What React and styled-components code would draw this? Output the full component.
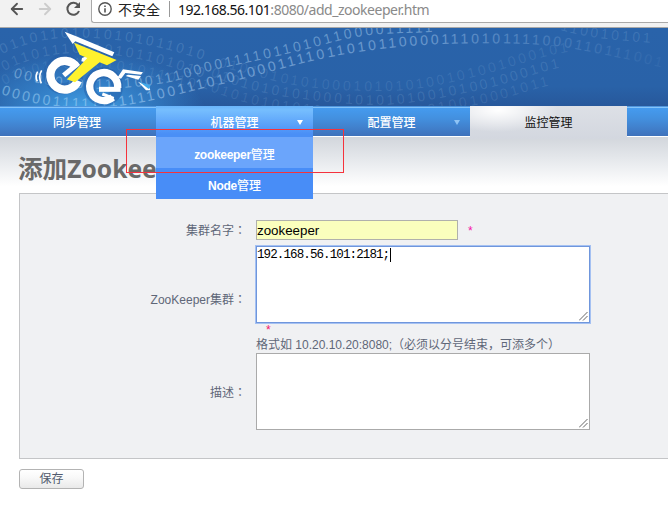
import React from 'react';
import styled, { createGlobalStyle, css } from 'styled-components';
import { ArrowLeft, ArrowRight } from 'lucide-react';

const GlobalStyle = createGlobalStyle`
  * { box-sizing: border-box; }
  body {
    margin: 0;
    background: #fff;
    overflow: hidden;
    font: 12px/16px "Liberation Sans", "Noto Sans CJK SC", sans-serif;
    color: #5f6778;
  }
`;

const Page = styled.div`
  position: relative;
  width: 668px;
  height: 519px;
  overflow: hidden;
`;

const BrowserBar = styled.div`
  display: flex;
  height: 28px;
  background: #f2f2f2;
  border-bottom: 1px solid #a9a9a9;
`;

const BrowserButtons = styled.div`
  display: flex;
  width: 91px;
  padding: 0 8px;
  gap: 10px;

  svg { flex: none; }
`;

const AddressBox = styled.div`
  display: flex;
  flex: 1;
  align-items: center;
  height: 23px;
  padding: 0 0 4px 6px;
  background: #fff;
  border: solid #a9a9a9;
  border-width: 0 0 1px 1px;
  border-bottom-left-radius: 3px;
  font: 14px/19px "Noto Sans", "Noto Sans CJK SC", sans-serif;
  color: #8a8a8a;
  white-space: nowrap;
`;

const Insecure = styled.span`
  margin-left: 6px;
  font-family: "Noto Sans CJK SC", sans-serif;
  color: #222;
`;

const Divider = styled.i`
  width: 1px;
  height: 16px;
  margin: 0 8px 0 9px;
  background: #999;
`;

const Host = styled.span`
  color: #111;
  letter-spacing: -0.5px;
`;

const Path = styled.span`
  letter-spacing: -0.47px;
`;

const Banner = styled.header`
  height: 78px;
  background:
    radial-gradient(ellipse 120px 60px at 85px 84px, #46a5e8 0%, #3584cc 40%, rgba(41, 98, 168, 0) 100%),
    linear-gradient(#2963aa 0%, #2962a8 75%, #27589b 100%);

  svg { display: block; }
`;

const Digits = styled.text`
  font: 14px "Liberation Sans", sans-serif;
  letter-spacing: 2.8px;
  fill: ${p => p.$fill || '#b5d9f5'};
  fill-opacity: ${p => p.$alpha};
`;

const Nav = styled.nav`
  display: flex;
  height: 31px;
  background: linear-gradient(#4f95dd 0 1px, #84c4fb 1px 2px, #459bef 2px, #4390df 40%, #3f72bb 30px, #fff 30px);
`;

const NavItem = styled.div`
  position: relative;
  display: flex;
  align-items: center;
  justify-content: center;
  width: 157px;
  padding-top: 3px;
  color: #fff;
  font-weight: 500;
  ${p => p.$first && css`
    width: 156px;
    padding-right: 2px;
  `}
  ${p => p.$open && css`
    background: linear-gradient(#69b4fb, #76befe 4px, #4a8ff6 28px);
  `}
  ${p => p.$light && css`
    height: 33px;
    padding-top: 1px;
    background:
      radial-gradient(ellipse 60px 22px at 28px 4px, #fff, rgba(255,255,255,0)),
      linear-gradient(#dde0e6, #d3d7df);
    color: #111;
    font-weight: 400;
  `}
`;

const Caret = styled.i`
  position: absolute;
  top: 14px;
  right: 10px;
  border: solid transparent;
  border-width: 5px 3px 0;
  border-top-color: ${p => p.$color};
`;

const Menu = styled.div`
  position: absolute;
  z-index: 2;
  top: 31px;
  left: 0;
  width: 157px;
`;

const MenuItem = styled.div`
  display: flex;
  align-items: center;
  justify-content: center;
  height: 31px;
  padding-top: 5px;
  background: ${p => (p.$active ? '#6ba5fb' : '#488df7')};

  b { letter-spacing: -0.3px; }
`;

const Heading = styled.div`
  height: 56px;
  padding: 15px 19px 0;
  background: linear-gradient(#d2d6dc, #e3e6ea 35%, #fff 88%);
`;

const Title = styled.h1`
  margin: 0 0 0 -1px;
  font: bold 24.6px/34px "Noto Sans", "Noto Sans CJK SC", sans-serif;
  color: #696969;
`;

const Panel = styled.form`
  height: 266px;
  margin-left: 19px;
  padding-top: 26px;
  background: #f0f1f3;
  border: 1px solid #c4c5c7;
  border-right: 0;
`;

const Row = styled.div`
  display: grid;
  grid-template-columns: 226px 1fr;
  column-gap: 10px;
  align-items: center;
  height: ${p => p.$height}px;
`;

const Label = styled.label`
  padding-top: ${p => p.$drop || 0}px;
  text-align: right;

  span { font-family: "Noto Sans CJK JP", sans-serif; }
`;

const TextInput = styled.input`
  width: 202px;
  height: 20px;
  margin: 0;
  padding: 1px 0 0;
  border: 1px solid #b0b1ac;
  outline: 0;
  background: #faffbd;
  color: #000;
  font: 13.33px "Liberation Sans", sans-serif;
`;

const Required = styled.i`
  margin-left: 10px;
  color: ${p => p.$color || '#f21a6c'};
  font-style: normal;
`;

const TextArea = styled.div`
  display: flex;
  align-items: flex-end;
  justify-content: space-between;
  width: 334px;
  height: 77px;
  padding: 1px;
  border: 1px solid ${p => (p.$focused ? '#6f96dc' : '#aaa')};
  box-shadow: ${p => (p.$focused ? '0 0 0 1px #a5c1f2' : 'none')};
  background: #fff;
  color: #000;
  font: 12.5px/16px "Liberation Mono", monospace;
  letter-spacing: -0.89px;
`;

const TypedText = styled.span`
  align-self: flex-start;
  height: 14px;
  margin-left: -1px;
  padding-right: 1px;
  line-height: 15px;
  border-right: 1px solid #000;
`;

const Hint = styled.div`
  height: 31px;
  margin-top: -6px;
  padding-left: 236px;
  line-height: 16px;

  div:last-child { line-height: 15px; }
`;

const SaveButton = styled.button`
  display: block;
  width: 65px;
  height: 20px;
  margin: 10px 0 0 19px;
  padding: 0;
  border: 1px solid #b3b3b3;
  border-radius: 3px;
  background: linear-gradient(#fff, #f9f9f9 40%, #e9e9e9);
  color: #525b6e;
  font: inherit;
  line-height: 18px;
`;

const Callout = styled.div`
  position: absolute;
  z-index: 3;
  top: 129px;
  left: 126px;
  width: 218px;
  height: 44px;
  border: 1px solid #f5333c;
  pointer-events: none;
`;

const Grip = () => (
  <svg width="9" height="9" stroke="#555" strokeWidth=".9" fill="none">
    <path d="M0 8.5L8.5 0M4 8.5L8.5 4" />
  </svg>
);

const waves = [
  { d: 'M2 26 C40 8 70 8 105 11 S170 21 220 37', t: '01101101010101011010', a: 0.18 },
  { d: 'M4 43 C40 24 80 22 115 27 S170 38 214 54', t: '01101110010101101010', a: 0.16 },
  { d: 'M4 57 C40 39 80 37 115 42 S170 55 214 65', t: '0110110100101011010', a: 0.12 },
  { d: 'M13 49 C50 60 90 63 135 59 S190 47 222 40 S290 26 330 15 S390 6 430 4 S470 3 480 -6', t: '000001011111001110000111101101011000011111', a: 0.44 },
  { d: 'M1 66 C35 78 75 82 110 79 S190 63 222 56 S290 37 330 29 S410 17 445 16 S540 14 575 21 S620 29 668 41', t: '00000111111111110011101010001111011010110000111010111100011011100100', a: 0.5, fill: 'url(#fade)' },
  { d: 'M218 39 C260 47 280 59 340 62 S420 62 470 50 S540 26 585 22', t: '0101010101000101010100101001000101', a: 0.12 },
  { d: 'M210 48 C255 66 285 70 340 75 S420 74 470 64 S540 41 585 35', t: '0101010101000101010100101001000101', a: 0.15 },
  { d: 'M200 59 C250 79 280 83 340 89 S420 87 470 78 S540 55 600 48', t: '1010101010100010101001010010001011', a: 0.13 },
  { d: 'M560 2 C585 9 605 12 668 16', t: '110010101', a: 0.16 },
];

const BannerArt = () => (
  <svg width="668" height="78" viewBox="0 0 668 78">
    <defs>
      <linearGradient id="fade" gradientUnits="userSpaceOnUse" x1="0" x2="668">
        <stop offset="0" stopColor="#a9dcf7" />
        <stop offset=".2" stopColor="#b5dafb" />
        <stop offset=".65" stopColor="#a5c8ec" />
        <stop offset=".85" stopColor="#a5c8ec" stopOpacity=".4" />
        <stop offset="1" stopColor="#a5c8ec" stopOpacity=".1" />
      </linearGradient>
      {waves.map((w, i) => <path key={i} id={`wave${i}`} d={w.d} />)}
    </defs>
    {waves.map((w, i) => (
      <Digits key={i} $alpha={w.a} $fill={w.fill}>
        <textPath href={`#wave${i}`}>{w.t}</textPath>
      </Digits>
    ))}
    <g transform="translate(25 -6) scale(.33333)">
      <g fill="none" stroke="#245ba4" strokeOpacity=".45" strokeWidth="34">
        <circle cx="115" cy="157" r="43" />
        <circle cx="235" cy="194" r="42" />
      </g>
      <g fill="none" stroke="#fff">
        <path d="M155 136A43 43 0 1 0 159 176" strokeWidth="25" />
        <path d="M278 197A42 42 0 1 0 263 226" strokeWidth="22" />
        <path d="M222 202H287" strokeWidth="15" />
        <path d="M232 216L266 229" strokeWidth="9" />
        <path d="M116 160L156 127" strokeWidth="15" />
        <path d="M38 149Q29 163 37 178M50 145Q39 163 49 184" strokeWidth="5" />
      </g>
      <g fill="#fff">
        <path d="M119 29L157 44L268 91L262 103L151 58L143 66Z" />
        <path d="M171 108L184 103L194 108L181 121L169 118Z" />
        <path d="M278 166L294 142L354 151L348 158L301 153L288 170Z" />
        <path d="M302 162L309 158L348 162L340 173Z" />
        <path d="M339 179L363 205L376 205L372 194Z" />
      </g>
      <path d="M344 180L377 190L371 201Z" fill="#42a9e9" />
      <path d="M147 62L275 114L246 130L224 121L150 181L126 172L187 108L164 98Z" fill="#fff22d" />
    </g>
  </svg>
);

export default function App() {
  return (
    <Page>
      <GlobalStyle />
      <BrowserBar>
        <BrowserButtons>
          <ArrowLeft size={18} color="#555" strokeWidth={2.4} />
          <ArrowRight size={18} color="#ccc" strokeWidth={2.4} />
          <svg width="18" height="18" viewBox="0 0 18 18">
            <path d="M14.2 5.2A6 6 0 1 0 15 11" fill="none" stroke="#555" strokeWidth="2" />
            <path d="M16 2V8H10Z" fill="#555" />
          </svg>
        </BrowserButtons>
        <AddressBox>
          <svg width="14" height="14" viewBox="0 0 14 14" fill="none" stroke="#555" strokeWidth="1.4">
            <circle cx="7" cy="7" r="6.2" />
            <path d="M7 6.2V10.4M7 3.5V5" strokeWidth="1.6" />
          </svg>
          <Insecure>不安全</Insecure>
          <Divider />
          <Host>192.168.56.101</Host>
          <Path>:8080/add_zookeeper.htm</Path>
        </AddressBox>
      </BrowserBar>

      <Banner><BannerArt /></Banner>

      <Nav>
        <NavItem $first>同步管理</NavItem>
        <NavItem $open>
          机器管理
          <Caret $color="#fff" />
          <Menu>
            <MenuItem $active><b>zookeeper</b>管理</MenuItem>
            <MenuItem><b>Node</b>管理</MenuItem>
          </Menu>
        </NavItem>
        <NavItem>配置管理<Caret $color="#8fc4f5" /></NavItem>
        <NavItem $light>监控管理</NavItem>
      </Nav>

      <Heading><Title>添加Zookeeper</Title></Heading>

      <Panel>
        <Row $height={20}>
          <Label>集群名字<span>：</span></Label>
          <div>
            <TextInput defaultValue="zookeeper" />
            <Required $color="#f516a8">*</Required>
          </div>
        </Row>
        <Row $height={88}>
          <Label $drop={30}>ZooKeeper集群<span>：</span></Label>
          <TextArea $focused>
            <TypedText>192.168.56.101:2181;</TypedText>
            <Grip />
          </TextArea>
        </Row>
        <Hint>
          <div><Required>*</Required></div>
          <div>格式如 10.20.10.20:8080;（必须以分号结束，可添多个）</div>
        </Hint>
        <Row $height={77}>
          <Label $drop={2}>描述<span>：</span></Label>
          <TextArea>
            <span />
            <Grip />
          </TextArea>
        </Row>
      </Panel>

      <SaveButton type="button">保存</SaveButton>
      <Callout />
    </Page>
  );
}
